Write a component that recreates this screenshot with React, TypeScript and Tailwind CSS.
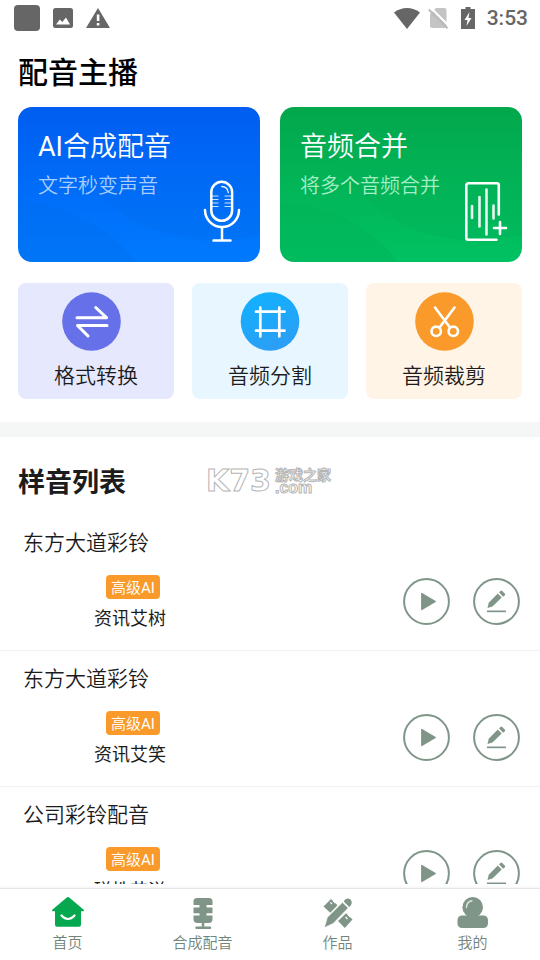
import React from "react";

interface Sample {
  title: string;
  voice: string;
}

const samples: Sample[] = [
  { title: "东方大道彩铃", voice: "资讯艾树" },
  { title: "东方大道彩铃", voice: "资讯艾笑" },
  { title: "公司彩铃配音", voice: "磁性艾洋" }
];

const StatusBar: React.FC = () => (
  <div className="flex h-9 shrink-0 items-center justify-between pl-[14px] pr-3 text-[#666]">
    <div className="flex items-center gap-[13px]">
      <span className="h-[26px] w-[26px] rounded bg-[#666]" />
      <svg width="20" height="20" viewBox="0 0 20 20">
        <rect width="20" height="20" rx="2.5" fill="currentColor" />
        <path d="M3 16.5 6.8 11.5 9.3 14 13 9.5 17 16.5z" fill="#fff" />
      </svg>
      <svg width="24" height="20" viewBox="0 0 24 20">
        <path d="M12 0 24 20H0z" fill="currentColor" />
        <path d="M10.800 6.500h2.600v6.500h-2.600zM10.800 15h2.600v2.500h-2.600z" fill="#fff" />
      </svg>
    </div>
    <div className="flex items-center">
      <svg width="26" height="21" viewBox="0 0 26 21">
        <path d="M0 4.500C7.500-1.500 18.500-1.500 26 4.500L13 21z" fill="currentColor" />
      </svg>
      <svg className="ml-2" width="21" height="21" viewBox="0 0 21 21">
        <path d="M8 0h8.500a2 2 0 0 1 2 2v16a2 2 0 0 1-2 2H4a2 2 0 0 1-2-2V6z" fill="#c4c4c4" />
        <path d="M2.500-.5 21 18" stroke="#fff" strokeWidth="2" />
        <path d="M.8 1.500 19.500 20.300" stroke="#bbb" strokeWidth="2" />
      </svg>
      <svg className="ml-3" width="14" height="22" viewBox="0 0 14 22">
        <path d="M4.500 0h5v2H14v20H0V2h4.500z" fill="currentColor" />
        <path d="M8.500 5 3.500 13h3L5.500 19l5-8h-3z" fill="#fff" />
      </svg>
      <span className="ml-3 font-['Roboto',sans-serif] text-[21px] font-medium leading-9">
        3:53
      </span>
    </div>
  </div>
);

const MicIcon = () => (
  <svg width="43" height="63" viewBox="0 0 43 63" fill="none" stroke="#fff" strokeLinecap="round">
    <rect x="8.3" y="1.800" width="20.800" height="39" rx="10.400" strokeWidth="2.500" />
    <path d="M2 30a17 17 0 0 0 34 0M19 47v13M10.500 60.500h17" strokeWidth="2.500" />
    <path d="M9 16h6M9 19.500h6M9 23h6M9 26.500h6M22 16h6M22 19.500h6M22 23h6M22 26.500h6" strokeWidth="1.200" strokeOpacity=".8" />
    <path d="M18.800 6.500c3.500 0 6 2.500 6.500 6" strokeWidth="1.300" />
  </svg>
);

const MergeIcon = () => (
  <svg width="44" height="62" viewBox="0 0 44 62" fill="none" stroke="#fff" strokeWidth="2.600" strokeLinecap="round">
    <path d="M34.800 33.500V4.300a2 2 0 0 0-2-2H4.300a2 2 0 0 0-2 2v52.500a2 2 0 0 0 2 2H32.500" />
    <path d="M8 25v12M15.500 16v29.500M22.500 8.500V53.500M29.500 24.500v13" strokeOpacity=".9" />
    <path d="M36 41v12M30 47h12" />
  </svg>
);

interface HeroCardProps {
  id: string;
  title: React.ReactNode;
  text: string;
  icon: React.ReactNode;
  className: string;
  textClass: string;
}

const HeroCard: React.FC<HeroCardProps> = ({ id, title, text, icon, className, textClass }) => (
  <button
    type="button"
    className={`relative flex min-h-[155px] overflow-hidden rounded-[14px] pl-5 pr-[14px] text-left ${className}`}
  >
    <svg
      className="absolute inset-0 h-full w-full"
      viewBox="0 0 242 155"
      preserveAspectRatio="none"
    >
      <defs>
        <linearGradient id={id} gradientUnits="userSpaceOnUse" x1="0" y1="50" x2="0" y2="155">
          <stop offset="0" stopColor="#000" stopOpacity="0" />
          <stop offset="1" stopColor="#000" stopOpacity=".035" />
        </linearGradient>
      </defs>
      <path d="M0 95C45 96 90 118 118 155H0z" fill={`url(#${id})`} />
      <path d="M50 50C85 105 150 150 242 128V50z" fill={`url(#${id})`} />
    </svg>
    <div className="relative flex-1 whitespace-nowrap pt-[22px]">
      <div className="text-[27px] font-[350] leading-8 text-white">{title}</div>
      <div className={`mt-3 text-[20px] font-[350] leading-6 ${textClass}`}>{text}</div>
    </div>
    <div className="absolute bottom-[19px] right-[14px]">{icon}</div>
  </button>
);

interface ToolProps {
  label: string;
  className: string;
  children: React.ReactNode;
}

const Tool: React.FC<ToolProps> = ({ label, className, children }) => (
  <button
    type="button"
    className={`flex flex-1 flex-col items-center rounded-lg pb-[9px] pt-[9px] ${className}`}
  >
    {children}
    <span className="mt-[7px] text-[21px] font-[350] leading-8 text-[#1c1c1c]">{label}</span>
  </button>
);

const SampleRow: React.FC<{ sample: Sample }> = ({ sample }) => (
  <li className="border-b border-[#f1f3f2] pb-[21px] pt-[10px]">
    <h3 className="pl-[23px] text-[21px] font-[350] leading-8">{sample.title}</h3>
    <div className="mt-[18px] flex items-start justify-between pl-[94px] pr-5">
      <div>
        <span className="ml-3 block w-fit rounded bg-[#fa9a2a] px-[5px] text-[15px] font-[350] leading-6 text-white">
          高级<span className="font-['Roboto',sans-serif] font-normal leading-none">AI</span>
        </span>
        <p className="mt-[6px] text-[18px] leading-6">{sample.voice}</p>
      </div>
      <div className="flex gap-[23px] pt-[3px] text-[#7f9588]">
        <button type="button" aria-label="播放">
          <svg width="47" height="47" viewBox="0 0 47 47">
            <circle cx="23.500" cy="23.500" r="22.400" fill="none" stroke="currentColor" strokeWidth="2" />
            <path d="M18.800 15.500 32.300 23.500 18.800 31.500z" fill="currentColor" stroke="currentColor" strokeWidth="1.400" strokeLinejoin="round" />
          </svg>
        </button>
        <button type="button" aria-label="编辑">
          <svg width="47" height="47" viewBox="0 0 47 47" fill="currentColor">
            <circle cx="23.500" cy="23.500" r="22.400" fill="none" stroke="currentColor" strokeWidth="2" />
            <path d="M14.500 30 15.700 24.800 24.800 15.600 28.700 19.500 19.500 28.600z" />
            <path d="M26 14.300 27.500 12.900q.8-.6 1.600.1l2.600 2.600q.8.900.1 1.700l-1.700 1.400z" />
            <path d="M14 32.500h19v1.700H14z" />
          </svg>
        </button>
      </div>
    </div>
  </li>
);

const HomeIcon = () => (
  <svg width="34" height="34" viewBox="0 0 34 34" fill="#05a84e">
    <path d="M15.800 1.500q1.200-1 2.400 0L32.700 13.700q1 1.300-.5 1.500H30v13.600q0 2-2 2H6q-2 0-2-2V15.200H1.800q-1.500-.2-.5-1.500z" />
    <path d="M10.500 19.500q6.500 7 13 0" fill="none" stroke="#fff" strokeWidth="2.200" strokeLinecap="round" />
  </svg>
);

const VoiceIcon = () => (
  <svg width="34" height="34" viewBox="0 0 34 34" fill="#7f9588">
    <path d="M11 2h12a3.500 3.500 0 0 1 3.500 3.500V9h-5a1 1 0 0 0 0 2.400h5v5.800h-5a1 1 0 0 0 0 2.400h5V23a4 4 0 0 1-4 4H18.300v3.500H24a1.200 1.200 0 0 1 0 2.500H10.500a1.200 1.200 0 0 1 0-2.500h5.300V27H11.500a4 4 0 0 1-4-4v-3.400h5a1 1 0 0 0 0-2.400h-5v-5.800h5a1 1 0 0 0 0-2.400h-5V5.500A3.500 3.500 0 0 1 11 2z" />
  </svg>
);

const WorksIcon = () => (
  <svg width="34" height="34" viewBox="0 0 34 34" fill="#7f9588">
    <path d="M2.500 10.500 10 3 16.500 9.300 9.200 16.800z" />
    <path d="M17 25 25 17.200 31.500 23.500 23.800 32z" />
    <path d="M9.300 6.300 11 8M12 4.500l2.500 2.500M24.500 21 26.500 23M27 18.700l2 2" stroke="#fff" strokeWidth="1.200" />
    <path d="M3.200 31.800 6.300 21.300 21.500 6.200 27.300 12 12.300 27.500z" stroke="#fff" strokeWidth=".8" />
    <path d="M22.800 5.500C24 2.300 27.500 1.500 29.500 3.500 31.500 5.500 31 9 28.200 11z" />
  </svg>
);

const MineIcon = () => (
  <svg width="34" height="34" viewBox="0 0 34 34" fill="#7f9588">
    <circle cx="16.700" cy="11.300" r="10.300" />
    <rect x="1.500" y="19.500" width="30.500" height="12.500" rx="4.500" />
    <path d="M10.500 11.500c0-4 2.300-6.300 5.500-6.800" fill="none" stroke="#fff" strokeOpacity=".75" strokeWidth="1.400" strokeLinecap="round" />
  </svg>
);

const tabs = [
  { label: "首页", icon: <HomeIcon /> },
  { label: "合成配音", icon: <VoiceIcon /> },
  { label: "作品", icon: <WorksIcon /> },
  { label: "我的", icon: <MineIcon /> }
];

const App: React.FC = () => {
  return (
    <div className="flex h-screen flex-col bg-white font-['Noto_Sans_CJK_SC',sans-serif] text-[#1c1c1c]">
      <StatusBar />

      <main className="mb-1 min-h-0 flex-1 overflow-hidden">
        <h1 className="px-[18px] pt-4 text-[30px] font-medium leading-9 text-black">
          配音主播
        </h1>

        <div className="mt-[19px] grid grid-cols-2 gap-5 px-[18px]">
          <HeroCard
            id="wave-compose"
            title={<><span className="font-['Roboto',sans-serif] font-normal leading-none">AI</span>合成配音</>}
            text="文字秒变声音"
            icon={<MicIcon />}
            className="bg-linear-to-b from-[#005df0] to-[#007aff]"
            textClass="text-[#a9cdff]"
          />
          <HeroCard
            id="wave-merge"
            title="音频合并"
            text="将多个音频合并"
            icon={<MergeIcon />}
            className="bg-linear-to-b from-[#03a74c] to-[#00c262]"
            textClass="text-[#a5eec6]"
          />
        </div>

        <div className="mt-[21px] flex gap-[18px] px-[18px]">
          <Tool label="格式转换" className="bg-[#e6e8fe]">
            <svg width="68" height="59" viewBox="0 0 68 59" fill="none">
              <circle cx="29.500" cy="29.500" r="29.300" fill="#6670e8" />
              <path
                d="M15 25.700H44.500L33.700 15.500M45 33.500H15.500L26 44"
                stroke="#fff"
                strokeWidth="3"
                strokeLinecap="round"
                strokeLinejoin="round"
              />
            </svg>
          </Tool>
          <Tool label="音频分割" className="bg-[#e8f6ff]">
            <svg width="60" height="59" viewBox="0 0 60 59" fill="none">
              <defs>
                <linearGradient id="split" x1="0" y1="0" x2=".4" y2="1">
                  <stop offset="0" stopColor="#0fb3ff" />
                  <stop offset="1" stopColor="#2a9ff5" />
                </linearGradient>
              </defs>
              <circle cx="30" cy="29.500" r="29.300" fill="url(#split)" />
              <path
                d="M20.300 15.500v29M39.300 15.500v29M16 19.700h28.500M16 38.700h28.500"
                stroke="#fff"
                strokeWidth="2.700"
                strokeLinecap="round"
              />
            </svg>
          </Tool>
          <Tool label="音频裁剪" className="bg-[#fff4e6]">
            <svg width="59" height="59" viewBox="0 0 59 59" fill="none">
              <circle cx="29.500" cy="29.500" r="29.300" fill="#f99a2a" />
              <g stroke="#fff" strokeWidth="2.600" strokeLinecap="round">
                <path d="M20 15.500 35 35.500M39.500 15.500 24.500 35.500" />
                <circle cx="21.200" cy="39.300" r="4.700" />
                <circle cx="38.300" cy="39.300" r="4.700" />
              </g>
            </svg>
          </Tool>
        </div>

        <div className="mt-[23px] h-[15px] bg-[#f5f7f7]" />

        <section>
          <div className="flex items-center px-[18px] pb-4 pt-[26px]">
            <h2 className="text-[27px] font-bold leading-9">样音列表</h2>
            <div className="ml-20 flex items-center gap-1 text-white">
              <span className="font-['DejaVu_Sans',sans-serif] text-[30px] font-bold leading-9 [-webkit-text-stroke:1px_#b5b5b5]">
                K73
              </span>
              <span className="flex flex-col text-[14px] font-bold leading-[14px] [-webkit-text-stroke:1px_#b5b5b5]">
                <span>游戏之家</span>
                <span className="font-['Liberation_Sans',sans-serif] text-[16px] leading-[14px]">.com</span>
              </span>
            </div>
          </div>

          {/* 样音 */}
          <ul>
            {samples.map((s, i) => (
              <SampleRow key={i} sample={s} />
            ))}
          </ul>
        </section>
      </main>

      <nav className="grid shrink-0 grid-cols-4 border-t border-[#e6e6e6] pb-2 pt-[7px] shadow-[0_-1px_2px_rgba(0,0,0,0.05)]">
        {tabs.map(t => (
          <a
            key={t.label}
            href="#"
            className="flex flex-col items-center gap-[2px] text-[15px] font-[350] leading-5 text-[#71857a]"
          >
            {t.icon}
            {t.label}
          </a>
        ))}
      </nav>
    </div>
  );
};

export default App;
